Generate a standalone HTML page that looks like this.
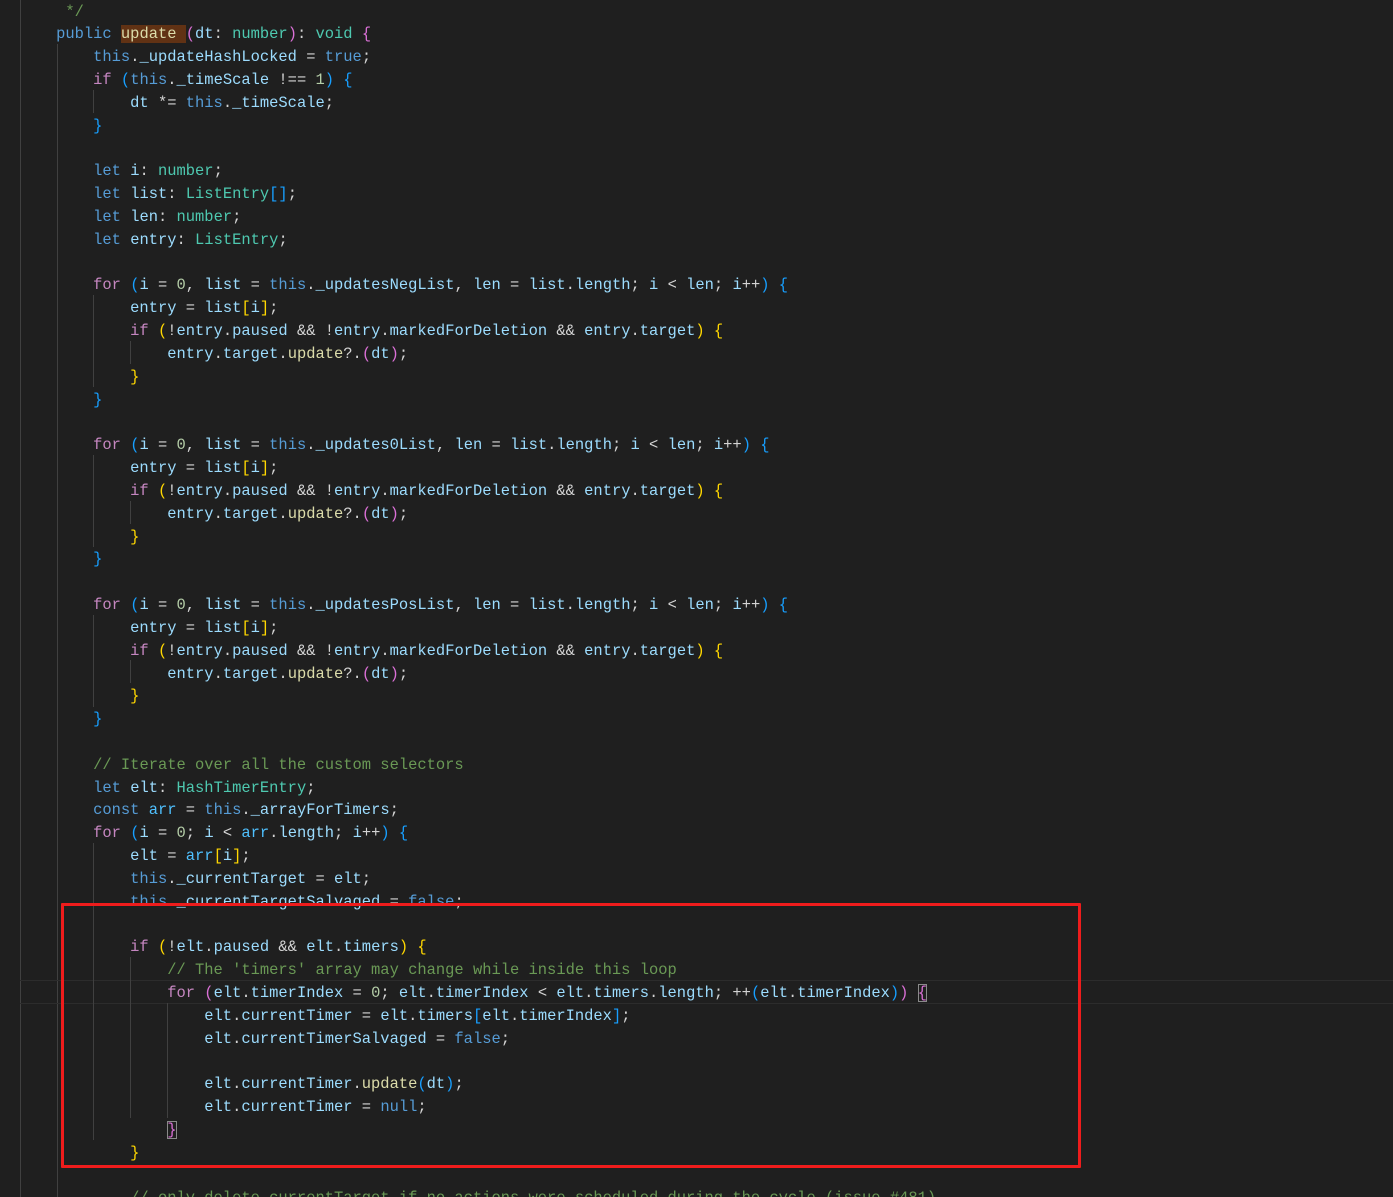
<!DOCTYPE html>
<html><head><meta charset="utf-8"><style>
html,body{margin:0;padding:0;background:#1f1f1f;width:1393px;height:1197px;overflow:hidden;position:relative}
.l{position:absolute;left:19px;margin-top:2px;height:22.82px;line-height:22.82px;white-space:pre;font-family:"Liberation Mono",monospace;font-size:15.45px;color:#d4d4d4}
.k{color:#569cd6}.c{color:#c586c0}.v{color:#9cdcfe}.f{color:#dcdcaa}.t{color:#4ec9b0}.n{color:#b5cea8}.cm{color:#6a9955}
.g{color:#ffd700}.p{color:#da70d6}.b{color:#179fff}.o{color:#4fc1ff}
.gd{position:absolute;width:1px;background:#404040}
.hl{background:#613214}
.bx{outline:1px solid #8a8a8a;outline-offset:-1px}
</style></head><body>
<div class="gd" style="left:20px;top:0;height:1197px"></div>
<div class="gd" style="left:57px;top:44px;height:1153px"></div>
<div style="position:absolute;left:20px;right:0;top:980px;height:22px;border-top:1px solid #2c2c2c;border-bottom:1px solid #2c2c2c"></div>
<div class="gd" style="left:93px;top:90px;height:23px"></div>
<div class="gd" style="left:93px;top:295px;height:92px"></div>
<div class="gd" style="left:93px;top:455px;height:92px"></div>
<div class="gd" style="left:93px;top:615px;height:92px"></div>
<div class="gd" style="left:93px;top:843px;height:297px"></div>
<div class="gd" style="left:130px;top:341px;height:23px"></div>
<div class="gd" style="left:130px;top:501px;height:23px"></div>
<div class="gd" style="left:130px;top:660px;height:23px"></div>
<div class="gd" style="left:130px;top:957px;height:161px"></div>
<div class="gd" style="left:167px;top:1003px;height:115px"></div>

<div class="l" style="top:-1.4px">     <span class="cm">*/</span></div>
<div class="l" style="top:21.4px">    <span class="k">public</span> <span class="f hl">update </span><span class="p">(</span><span class="v">dt</span>: <span class="t">number</span><span class="p">)</span>: <span class="t">void</span> <span class="p">{</span></div>
<div class="l" style="top:44.2px">        <span class="k">this</span>.<span class="v">_updateHashLocked</span> = <span class="k">true</span>;</div>
<div class="l" style="top:67.1px">        <span class="c">if</span> <span class="b">(</span><span class="k">this</span>.<span class="v">_timeScale</span> !== <span class="n">1</span><span class="b">)</span> <span class="b">{</span></div>
<div class="l" style="top:89.9px">            <span class="v">dt</span> *= <span class="k">this</span>.<span class="v">_timeScale</span>;</div>
<div class="l" style="top:112.7px">        <span class="b">}</span></div>
<div class="l" style="top:158.3px">        <span class="k">let</span> <span class="v">i</span>: <span class="t">number</span>;</div>
<div class="l" style="top:181.2px">        <span class="k">let</span> <span class="v">list</span>: <span class="t">ListEntry</span><span class="b">[]</span>;</div>
<div class="l" style="top:204.0px">        <span class="k">let</span> <span class="v">len</span>: <span class="t">number</span>;</div>
<div class="l" style="top:226.8px">        <span class="k">let</span> <span class="v">entry</span>: <span class="t">ListEntry</span>;</div>

<div class="l" style="top:272.4px">        <span class="c">for</span> <span class="b">(</span><span class="v">i</span> = <span class="n">0</span>, <span class="v">list</span> = <span class="k">this</span>.<span class="v">_updatesNegList</span>, <span class="v">len</span> = <span class="v">list</span>.<span class="v">length</span>; <span class="v">i</span> &lt; <span class="v">len</span>; <span class="v">i</span>++<span class="b">)</span> <span class="b">{</span></div>
<div class="l" style="top:295.3px">            <span class="v">entry</span> = <span class="v">list</span><span class="g">[</span><span class="v">i</span><span class="g">]</span>;</div>
<div class="l" style="top:318.1px">            <span class="c">if</span> <span class="g">(</span>!<span class="v">entry</span>.<span class="v">paused</span> &amp;&amp; !<span class="v">entry</span>.<span class="v">markedForDeletion</span> &amp;&amp; <span class="v">entry</span>.<span class="v">target</span><span class="g">)</span> <span class="g">{</span></div>
<div class="l" style="top:340.9px">                <span class="v">entry</span>.<span class="v">target</span>.<span class="f">update</span>?.<span class="p">(</span><span class="v">dt</span><span class="p">)</span>;</div>
<div class="l" style="top:363.7px">            <span class="g">}</span></div>
<div class="l" style="top:386.6px">        <span class="b">}</span></div>

<div class="l" style="top:432.2px">        <span class="c">for</span> <span class="b">(</span><span class="v">i</span> = <span class="n">0</span>, <span class="v">list</span> = <span class="k">this</span>.<span class="v">_updates0List</span>, <span class="v">len</span> = <span class="v">list</span>.<span class="v">length</span>; <span class="v">i</span> &lt; <span class="v">len</span>; <span class="v">i</span>++<span class="b">)</span> <span class="b">{</span></div>
<div class="l" style="top:455.0px">            <span class="v">entry</span> = <span class="v">list</span><span class="g">[</span><span class="v">i</span><span class="g">]</span>;</div>
<div class="l" style="top:477.9px">            <span class="c">if</span> <span class="g">(</span>!<span class="v">entry</span>.<span class="v">paused</span> &amp;&amp; !<span class="v">entry</span>.<span class="v">markedForDeletion</span> &amp;&amp; <span class="v">entry</span>.<span class="v">target</span><span class="g">)</span> <span class="g">{</span></div>
<div class="l" style="top:500.7px">                <span class="v">entry</span>.<span class="v">target</span>.<span class="f">update</span>?.<span class="p">(</span><span class="v">dt</span><span class="p">)</span>;</div>
<div class="l" style="top:523.5px">            <span class="g">}</span></div>
<div class="l" style="top:546.3px">        <span class="b">}</span></div>

<div class="l" style="top:592.0px">        <span class="c">for</span> <span class="b">(</span><span class="v">i</span> = <span class="n">0</span>, <span class="v">list</span> = <span class="k">this</span>.<span class="v">_updatesPosList</span>, <span class="v">len</span> = <span class="v">list</span>.<span class="v">length</span>; <span class="v">i</span> &lt; <span class="v">len</span>; <span class="v">i</span>++<span class="b">)</span> <span class="b">{</span></div>
<div class="l" style="top:614.8px">            <span class="v">entry</span> = <span class="v">list</span><span class="g">[</span><span class="v">i</span><span class="g">]</span>;</div>
<div class="l" style="top:637.6px">            <span class="c">if</span> <span class="g">(</span>!<span class="v">entry</span>.<span class="v">paused</span> &amp;&amp; !<span class="v">entry</span>.<span class="v">markedForDeletion</span> &amp;&amp; <span class="v">entry</span>.<span class="v">target</span><span class="g">)</span> <span class="g">{</span></div>
<div class="l" style="top:660.5px">                <span class="v">entry</span>.<span class="v">target</span>.<span class="f">update</span>?.<span class="p">(</span><span class="v">dt</span><span class="p">)</span>;</div>
<div class="l" style="top:683.3px">            <span class="g">}</span></div>
<div class="l" style="top:706.1px">        <span class="b">}</span></div>

<div class="l" style="top:751.7px">        <span class="cm">// Iterate over all the custom selectors</span></div>
<div class="l" style="top:774.6px">        <span class="k">let</span> <span class="v">elt</span>: <span class="t">HashTimerEntry</span>;</div>
<div class="l" style="top:797.4px">        <span class="k">const</span> <span class="o">arr</span> = <span class="k">this</span>.<span class="v">_arrayForTimers</span>;</div>
<div class="l" style="top:820.2px">        <span class="c">for</span> <span class="b">(</span><span class="v">i</span> = <span class="n">0</span>; <span class="v">i</span> &lt; <span class="o">arr</span>.<span class="v">length</span>; <span class="v">i</span>++<span class="b">)</span> <span class="b">{</span></div>
<div class="l" style="top:843.0px">            <span class="v">elt</span> = <span class="o">arr</span><span class="g">[</span><span class="v">i</span><span class="g">]</span>;</div>
<div class="l" style="top:865.9px">            <span class="k">this</span>.<span class="v">_currentTarget</span> = <span class="v">elt</span>;</div>
<div class="l" style="top:888.7px">            <span class="k">this</span>.<span class="v">_currentTargetSalvaged</span> = <span class="k">false</span>;</div>

<div class="l" style="top:934.3px">            <span class="c">if</span> <span class="g">(</span>!<span class="v">elt</span>.<span class="v">paused</span> &amp;&amp; <span class="v">elt</span>.<span class="v">timers</span><span class="g">)</span> <span class="g">{</span></div>
<div class="l" style="top:957.2px">                <span class="cm">// The 'timers' array may change while inside this loop</span></div>
<div class="l" style="top:980.0px">                <span class="c">for</span> <span class="p">(</span><span class="v">elt</span>.<span class="v">timerIndex</span> = <span class="n">0</span>; <span class="v">elt</span>.<span class="v">timerIndex</span> &lt; <span class="v">elt</span>.<span class="v">timers</span>.<span class="v">length</span>; ++<span class="b">(</span><span class="v">elt</span>.<span class="v">timerIndex</span><span class="b">)</span><span class="p">)</span> <span class="p bx">{</span></div>
<div class="l" style="top:1002.8px">                    <span class="v">elt</span>.<span class="v">currentTimer</span> = <span class="v">elt</span>.<span class="v">timers</span><span class="b">[</span><span class="v">elt</span>.<span class="v">timerIndex</span><span class="b">]</span>;</div>
<div class="l" style="top:1025.6px">                    <span class="v">elt</span>.<span class="v">currentTimerSalvaged</span> = <span class="k">false</span>;</div>
<div class="l" style="top:1071.3px">                    <span class="v">elt</span>.<span class="v">currentTimer</span>.<span class="f">update</span><span class="b">(</span><span class="v">dt</span><span class="b">)</span>;</div>
<div class="l" style="top:1094.1px">                    <span class="v">elt</span>.<span class="v">currentTimer</span> = <span class="k">null</span>;</div>
<div class="l" style="top:1116.9px">                <span class="p bx">}</span></div>
<div class="l" style="top:1139.7px">            <span class="g">}</span></div>
<div class="l" style="top:1185.4px">            <span class="cm">// only delete currentTarget if no actions were scheduled during the cycle (issue #481)</span></div>

<div style="position:absolute;left:61px;top:903px;width:1014px;height:259px;border:3px solid #ee1c1c;border-radius:1px"></div>
</body></html>
